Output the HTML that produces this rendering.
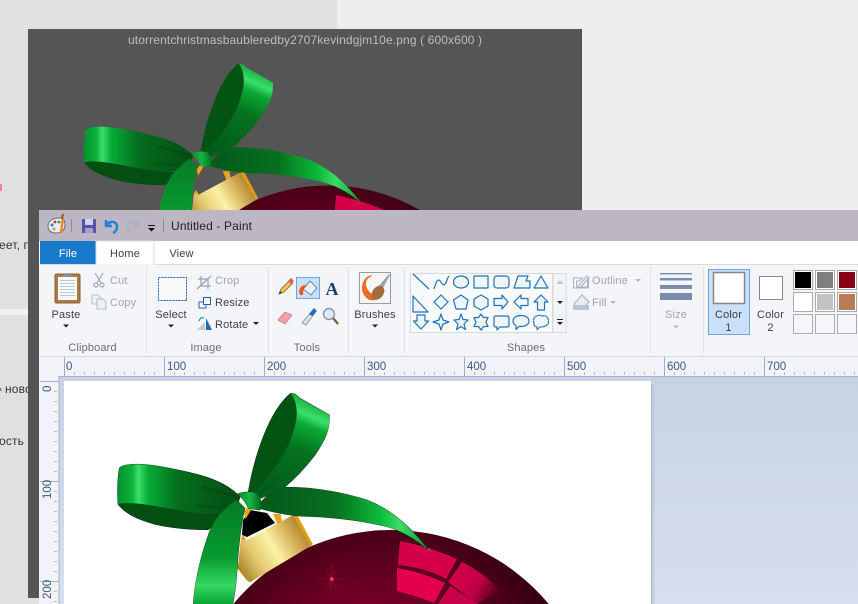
<!DOCTYPE html>
<html><head><meta charset="utf-8"><style>
html,body{margin:0;padding:0;background:#eee;overflow:hidden;width:858px;height:604px}
svg{display:block}
text{font-family:"Liberation Sans",sans-serif;font-size:11px;letter-spacing:.15px;fill:#3e3e46}
.d{fill:#a3a5a9}.g{fill:#6c6c74}.m{text-anchor:middle}
.r{font-size:11.5px;fill:#3d5a80;letter-spacing:0}
.s path,.s rect,.s ellipse,.s polygon{fill:#eef5fb;stroke:#2272b5;stroke-width:1.2;stroke-linejoin:round}
</style></head><body>
<svg width="858" height="604" viewBox="0 0 858 604" xmlns="http://www.w3.org/2000/svg">
<defs>
<linearGradient id="lp" x1="0" y1="0" x2="1" y2="0"><stop offset="0" stop-color="#08902c"/><stop offset=".12" stop-color="#0bb53a"/><stop offset=".17" stop-color="#3ce068"/><stop offset=".25" stop-color="#06ac36"/><stop offset=".5" stop-color="#056d1d"/><stop offset="1" stop-color="#034d12"/></linearGradient>
<linearGradient id="tp" gradientUnits="userSpaceOnUse" x1="705" y1="50" x2="590" y2="325"><stop offset="0" stop-color="#069a30"/><stop offset=".2" stop-color="#3ce068"/><stop offset=".3" stop-color="#0aa835"/><stop offset=".55" stop-color="#05721f"/><stop offset="1" stop-color="#04601a"/></linearGradient>
<linearGradient id="rt" x1="0" y1="0" x2="1" y2="0"><stop offset="0" stop-color="#04591a"/><stop offset=".45" stop-color="#06701f"/><stop offset=".72" stop-color="#0cbd3c"/><stop offset=".83" stop-color="#3bdc66"/><stop offset="1" stop-color="#069a30"/></linearGradient>
<linearGradient id="dn" x1="0" y1="0" x2="0" y2="1"><stop offset="0" stop-color="#057a24"/><stop offset=".55" stop-color="#079a2f"/><stop offset=".82" stop-color="#35d860"/><stop offset="1" stop-color="#08a436"/></linearGradient>
<linearGradient id="kn" x1="0" y1="0" x2="1" y2="0"><stop offset="0" stop-color="#078a2b"/><stop offset=".5" stop-color="#17b544"/><stop offset="1" stop-color="#056d20"/></linearGradient>
<linearGradient id="go" gradientUnits="userSpaceOnUse" x1="490" y1="570" x2="680" y2="450"><stop offset="0" stop-color="#b48f35"/><stop offset=".22" stop-color="#e2c870"/><stop offset=".5" stop-color="#fdf2a5"/><stop offset=".8" stop-color="#d0aa52"/><stop offset="1" stop-color="#a67e25"/></linearGradient>
<radialGradient id="ball" gradientUnits="userSpaceOnUse" cx="372" cy="690" r="200"><stop offset="0" stop-color="#a8003c"/><stop offset=".55" stop-color="#680022"/><stop offset="1" stop-color="#30000e"/></radialGradient>
<linearGradient id="fa" gradientUnits="userSpaceOnUse" x1="450" y1="565" x2="500" y2="595"><stop offset="0" stop-color="#d8004c"/><stop offset=".6" stop-color="#c00044"/><stop offset="1" stop-color="#a0003a" stop-opacity="0"/></linearGradient>
<linearGradient id="cv" x1="0" y1="0" x2="0" y2="1"><stop offset="0" stop-color="#c7d2e5"/><stop offset="1" stop-color="#d5dfee"/></linearGradient>
<linearGradient id="sh" x1="0" y1="0" x2="1" y2="0"><stop offset="0" stop-color="#aab7cc"/><stop offset="1" stop-color="#c7d2e5" stop-opacity="0"/></linearGradient>
<clipPath id="c1"><rect x="28" y="29" width="554" height="181"/></clipPath>
<clipPath id="c2"><rect x="64" y="381" width="587" height="223"/></clipPath>

<g id="bow">
 <g transform="translate(80,380) scale(.33333)">
  <path d="M505 335C525 220 570 90 632 40C665 60 665 200 560 345Z" fill="#035413"/>
  <path d="M632 40C640 38 650 45 660 55L748 105C750 150 735 180 705 225C670 270 640 300 610 325L530 360L510 340C590 270 640 190 650 110C652 80 645 55 632 40Z" fill="url(#tp)"/>
  <path d="M525 335L600 240M535 345L600 290" stroke="#034a12" stroke-width="8" opacity=".3" fill="none"/>
  <path d="M114 372C150 360 250 385 300 392C350 400 400 405 440 405L385 449C320 450 240 440 200 425C160 412 130 395 114 372Z" fill="#034f12"/>
  <path d="M118 265C130 250 180 250 230 258C300 270 370 285 410 303C440 315 465 335 480 350L470 385C430 410 380 405 300 392C240 382 160 362 114 372C112 340 112 300 118 265Z" fill="url(#lp)"/>
  <path d="M365 320L470 350M350 378L440 382" stroke="#023d0e" stroke-width="8" opacity=".35" fill="none"/>
  <path d="M540 370C560 345 590 325 620 322C700 320 800 340 860 360C940 390 1000 450 1045 510C1000 470 950 445 900 435C830 420 750 410 660 408C620 405 570 395 540 385Z" fill="url(#rt)"/>
  <path d="M470 360C420 390 395 430 380 480C360 540 345 600 340 672L458 672C465 640 470 600 473 540C478 480 485 420 495 385Z" fill="url(#dn)"/>
  <path d="M473 342C495 334 520 334 530 342C544 355 546 375 540 390L505 385C500 370 488 355 473 342Z" fill="url(#kn)"/>
 </g>
</g>
<g id="neck">
 <g transform="translate(80,380) scale(.33333)">
  <path d="M500 385a12 12 0 0 1 15 2l-18 30-5-20Z" fill="#e8a41a"/>
  <path d="M580 402l22 0 5 28-14 6Z" fill="#e8a41a"/>
  <path d="M490 465l8 12-10 10-6-10Z" fill="#e8a41a"/>
  <path d="M500 480L640 405L697 495L510 607L475 550L482 480Z" fill="url(#go)"/>
  <path d="M638 403L650 402L698 492L690 497Z" fill="#dc9d18"/>
  <path d="M475 550L510 607L500 600L470 562Z" fill="#b98414"/>
 </g>
</g>
<g id="orb">
 <path d="M233.300 604A205 205 0 0 1 548.700 604Z" fill="url(#ball)"/>
 <path d="M400 541C425 546 441 552 457 559L446 579C430 570 415 567 398 565Z" fill="#d40049"/>
 <path d="M397 568C415 571 430 576 445 583L434 603C420 597 408 594 397 591Z" fill="#e4004f"/>
 <path d="M462 562C478 570 490 580 500 590L477 604L448 582Z" fill="url(#fa)"/>
 <path d="M450 586L478 604H438Z" fill="#c8004a"/>
 <g stroke="#d81040" fill="none"><path d="M332 565L331 590" stroke-width=".7" opacity=".55"/><path d="M317 579H347" stroke-width=".5" opacity=".5"/><path d="M326 571L337 588M337 570L325 590" stroke-width=".7" opacity=".45"/></g>
 <circle cx="331.800" cy="579" r="1.800" fill="#ff4060"/>
</g>
</defs>

<!-- page background -->
<rect width="858" height="604" fill="#eeeeee"/>
<rect x="0" y="0" width="337" height="604" fill="#e0e0e0"/>
<rect x="0" y="309" width="337" height="6" fill="#f0f0f0"/>
<rect x="0" y="184" width="2" height="7" fill="#ff7a92"/>
<text x="-1" y="249" style="font-size:12px;fill:#333">еет, п</text>
<rect x="0" y="388" width="1.500" height="3" fill="#4a90d0"/>
<text x="5" y="393" style="font-size:12px;fill:#333">ново</text>
<text x="-1" y="445" style="font-size:12px;fill:#333">ость</text>

<!-- dark viewer -->
<rect x="28" y="29" width="554" height="569" fill="#555555"/>
<text x="128" y="44" textLength="354" style="font-size:12px;fill:#bdbdbd;letter-spacing:0">utorrentchristmasbaubleredby2707kevindgjm10e.png ( 600x600 )</text>
<g clip-path="url(#c1)">
 <g transform="translate(84,63) scale(.894) translate(-118,-393)">
  <use href="#orb"/><use href="#neck"/><use href="#bow"/>
 </g>
</g>

<!-- paint window -->
<rect x="39" y="210" width="819" height="394" fill="#f3f4f7"/>
<rect x="39" y="210" width="819" height="31" fill="#bdb6c3"/>
<rect x="39" y="241" width="819" height="23" fill="#ffffff"/>
<rect x="40" y="241" width="56" height="23" fill="#1979ca"/>
<text x="68" y="257" class="m" style="fill:#fff">File</text>
<path d="M96 264V241H154V264" fill="#fff" stroke="#dadbdc"/>
<text x="125" y="257" class="m">Home</text>
<text x="181.500" y="257" class="m">View</text>
<path d="M39 264.500H96M154 264.500H858" stroke="#dadbdc"/>
<rect x="39" y="265" width="819" height="91" fill="#f4f5f8"/>
<path d="M39 356.500H858" stroke="#d5d8e0"/>
<path d="M146.500 267V353M268.500 267V353M348.500 267V353M404.500 267V353M650.500 267V353M703.500 267V353" stroke="#dfe1e6"/>

<!-- title bar icons -->
<path d="M48 226c0-6 6-8 11-8 5 0 6 4 6 7 0 6-5 8-10 8-4 0-7-3-7-7Z" fill="#e8eef5" stroke="#5a6c80"/>
<circle cx="52" cy="225" r="1.500" fill="#3a78c8"/><circle cx="55" cy="222" r="1.500" fill="#d43a3a"/><circle cx="59" cy="222" r="1.500" fill="#3aa048"/><circle cx="54" cy="229" r="1.500" fill="#e09a20"/>
<path d="M61 233L63 218" stroke="#ee8a1e" stroke-width="2.500"/>
<path d="M62 219l1-5" stroke="#905a20" stroke-width="2"/>
<path d="M71.500 219V232M163.500 219V232" stroke="#8f8a96"/>
<rect x="82" y="219" width="14" height="14" rx="1" fill="#5e4fa8"/>
<rect x="85" y="219" width="8" height="6" fill="#cfd3ea"/>
<rect x="85" y="228" width="8" height="5" fill="#9fa3cf"/>
<path d="M106 220v6h6M106.500 225.500C110 220 117 221 117 227c0 3-2 5-4 6" fill="none" stroke="#1f84d8" stroke-width="2.500"/>
<path d="M138 220v6h-6M137.500 225.500C134 220 127 221 127 227c0 3 2 5 4 6" fill="none" stroke="#a8b2c0" stroke-width="2.500"/>
<path d="M148 225.500h7" stroke="#111"/><path d="M148 228h7l-3.500 3.500Z" fill="#111"/>
<text x="171" y="230" textLength="81" style="font-size:12px;fill:#222;letter-spacing:0">Untitled - Paint</text>

<!-- clipboard -->
<rect x="55" y="274" width="25" height="29" rx="1.500" fill="#a97a45" stroke="#8a6234"/>
<rect x="58" y="277" width="19" height="23" fill="#f7f8fa"/>
<path d="M60 280.500H75M60 283.500H75M60 286.500H75M60 289.500H75M60 292.500H75M60 295.500H75" stroke="#bcc6d6"/>
<path d="M61 277l3-2 3-2h1l3 2 3 2Z" fill="#8b8f96"/>
<text x="66" y="318" class="m">Paste</text>
<path d="M63 324.500h6l-3 3Z" fill="#222"/>
<g fill="none" stroke="#a4b0c2" stroke-width="1.300"><path d="M95 273l6 10M103 273l-6 10"/><circle cx="96" cy="285" r="2"/><circle cx="102" cy="285" r="2"/></g>
<text x="110" y="284" class="d">Cut</text>
<path d="M92 295h6l3 3v6h-9Z" fill="#eef2f6" stroke="#b3bfd0"/>
<path d="M97 299h6l3 3v7h-9Z" fill="#eef2f6" stroke="#b3bfd0"/>
<text x="110" y="306" class="d">Copy</text>
<text x="92.500" y="351" class="m g">Clipboard</text>

<!-- image -->
<rect x="158.500" y="277.500" width="28" height="23" fill="#f8f9fb" stroke="#1a62a8" stroke-dasharray="2 1"/>
<text x="171" y="318" class="m">Select</text>
<path d="M168 324.500h6l-3 3Z" fill="#222"/>
<path d="M201 276v10h10M198 279h10v10M197 289l14-13" fill="none" stroke="#93a2b8" stroke-width="1.200"/>
<text x="215" y="284" class="d">Crop</text>
<rect x="199" y="302" width="7" height="6" fill="#fff" stroke="#1b63ad"/>
<rect x="203.500" y="297.500" width="7" height="7" fill="#fff" stroke="#1b63ad"/>
<text x="215" y="306">Resize</text>
<path d="M197 330L205 322V330Z" fill="#c6c8ca"/><path d="M206 330V318L212 330Z" fill="#1b6cb8"/>
<path d="M199 321c1-3 3-4 5-3" fill="none" stroke="#1b8de0" stroke-width="1.200"/>
<text x="215" y="328">Rotate</text>
<path d="M253 322h6l-3 3Z" fill="#222"/>
<text x="206" y="351" class="m g">Image</text>

<!-- tools -->
<path d="M279 294l2-5 9-9 3 3-9 9Z" fill="#f2c14e" stroke="#7a6a3a" stroke-width=".8"/><path d="M288 281l3-3 3 3-3 3Z" fill="#e06060"/>
<path d="M279 294l1-3 2 2Z" fill="#333"/>
<rect x="296.500" y="277.500" width="23" height="21" fill="#c9e0f7" stroke="#6ba5e3"/>
<path d="M303 289l7-8 7 7-6 7Z" fill="#e4f0fa" stroke="#6d87a8"/><path d="M300 295c-2-5 0-9 5-10l1 2c-2 1-3 3-3 8Z" fill="#e8581c"/>
<text x="332" y="295" class="m" style="font-family:'Liberation Serif',serif;font-weight:bold;font-size:18px;fill:#1e3f6e;letter-spacing:0">A</text>
<path d="M278 320l7-8 7 3-7 9Z" fill="#f3a0a8" stroke="#c97a84" stroke-width=".8"/>
<path d="M302 323l10-12 3 2-9 12Z" fill="#d7e2ea" stroke="#7d8a96" stroke-width=".7"/><path d="M309 314l5-6 3 3-5 5Z" fill="#1f6cba"/>
<circle cx="329" cy="314" r="5.500" fill="#dceaf6" stroke="#8c99a8" stroke-width="1.400"/><path d="M333 318l5 6" stroke="#8a5a2e" stroke-width="2.200"/>
<text x="307" y="351" class="m g">Tools</text>

<!-- brushes -->
<rect x="359.500" y="272.500" width="31" height="31" fill="#f4f5f6" stroke="#9c9c9c"/>
<path d="M362 288c0-7 4-12 10-13-1 2-5 3-6 7-1 5 3 11 8 13 3 1 6 1 8 0-3 5-8 6-12 5-4-1-8-6-8-12Z" fill="#ee6a24"/>
<path d="M378 287l11-13 1 1-8 15Z" fill="#97a3b2"/>
<path d="M372 293c1-5 6-8 9-7 3 1 4 4 3 7-2 5-6 8-10 6-2-1-3-3-2-6Z" fill="#a36c3c"/>
<text x="375" y="318" class="m">Brushes</text>
<path d="M372 324.500h6l-3 3Z" fill="#222"/>

<!-- shapes -->
<rect x="410.500" y="273.500" width="142" height="59" fill="#f8fafc" stroke="#d6d9de"/>
<rect x="553" y="273.500" width="13" height="59" fill="#f4f5f8" stroke="#d6d9de"/>
<path d="M556 284l4-4 4 4Z" fill="#c3c8cf"/><path d="M557 301h6l-3 3Z" fill="#222"/><path d="M557 319.500h6" stroke="#222"/><path d="M557 322h6l-3 3Z" fill="#222"/>
<g class="s">
 <path d="M413 274L429 289" style="fill:none"/>
 <path d="M434 289C436 282 438 277 441 282C443 286 445 286 447 280C448 277 449 276 449 276" style="fill:none"/>
 <ellipse cx="461" cy="282" rx="7.500" ry="6"/>
 <rect x="474" y="276" width="14" height="12"/>
 <rect x="494" y="276" width="15" height="12" rx="3"/>
 <path d="M514 288L518 276H528L526 281H530L530 288Z"/>
 <path d="M534 288L541 276L548 288Z"/>
 <path d="M413 296V312H428Z"/>
 <path d="M441 295L448 302L441 309L434 302Z"/>
 <path d="M461 295L468 300L466 309H456L453.500 300Z"/>
 <path d="M481 295L488 299V306L481 310L474 306V299Z"/>
 <path d="M494 298.500H502V295L508 302L502 309V305.500H494Z"/>
 <path d="M528 298.500H521V295L514 302L521 309V305.500H528Z"/>
 <path d="M541 295L548 302H544.500V310H537.500V302H534Z"/>
 <path d="M417 315H425V321H428.500L421 329L413.500 321H417Z"/>
 <path d="M441 314L443 320L449 322L443 324L441 330L439 324L433 322L439 320Z"/>
 <path d="M461 314L463 319.500L468 320L464 324L465.500 329.500L461 326.500L456.500 329.500L458 324L454 320L459 319.500Z"/>
 <path d="M481 314L483.500 317.500H488L486 322L488 326.500H483.500L481 330L478.500 326.500H474L476 322L474 317.500H478.500Z"/>
 <path d="M496 316H507Q509 316 509 318V325Q509 327 507 327H500L497 330V327H496Q494 327 494 325V318Q494 316 496 316Z"/>
 <path d="M521 315.500C526 315.500 529 318 529 321C529 324 526 326.500 521 326.500L519 326.500L516 329.500V325.500C514 324.500 513 323 513 321C513 318 516 315.500 521 315.500Z"/>
 <path d="M535 317C537 315 540 315 542 316C545 315 548 317 548 319C549 321 549 323 547 325C545 327 542 327 540 327L537 329.500L537 327C535 327 533.500 325 534 323C533 321 533.500 318 535 317Z" stroke-dasharray="3 .4"/>
</g>
<text x="526" y="351" class="m g">Shapes</text>

<!-- outline fill -->
<path d="M573.500 278h9l-3 3-3 0v6l11 0v-8l1-1v10h-15Z" fill="none" stroke="#a8b4c4"/>
<path d="M578 286l9-10 2 2-9 10Z" fill="#dfe6ee" stroke="#9aa7b8" stroke-width=".8"/>
<text x="592" y="284" class="d">Outline</text><path d="M635 279h6l-3 3Z" fill="#b5b8bd"/>
<path d="M574 304l8-9 7 7-6 6h-7Z" fill="#e7edf3" stroke="#a3b1c3"/><rect x="573" y="305" width="16" height="5" fill="#b7c5d8"/>
<text x="592" y="306" class="d">Fill</text><path d="M610 301h6l-3 3Z" fill="#b5b8bd"/>

<!-- size -->
<rect x="660" y="273" width="32" height="1.400" fill="#7b8cab"/>
<rect x="660" y="278" width="32" height="2.400" fill="#7b8cab"/>
<rect x="660" y="285" width="32" height="4" fill="#7b8cab"/>
<rect x="660" y="293" width="32" height="7" fill="#7b8cab"/>
<text x="676" y="318" class="m d">Size</text>
<path d="M673 325.500h6l-3 3Z" fill="#b5b8bd"/>

<!-- colours -->
<rect x="708.500" y="269.500" width="41" height="65" fill="#c9e0f7" stroke="#6ba5e3"/>
<rect x="713.500" y="272.500" width="31" height="31" fill="#fff" stroke="#868686" stroke-width="1.500"/>
<text x="728.500" y="318" class="m">Color</text><text x="728.500" y="331" class="m">1</text>
<rect x="759.500" y="276.500" width="23" height="23" fill="#fff" stroke="#868686"/>
<text x="770.500" y="318" class="m">Color</text><text x="770.500" y="331" class="m">2</text>
<g stroke="#ababab" fill="#f5f6f9">
<rect x="793.500" y="270.500" width="19" height="19" fill="#fff"/><rect x="815.500" y="270.500" width="19" height="19" fill="#fff"/><rect x="837.500" y="270.500" width="19" height="19" fill="#fff"/>
<rect x="793.500" y="292.500" width="19" height="19" fill="#fff"/><rect x="815.500" y="292.500" width="19" height="19" fill="#fff"/><rect x="837.500" y="292.500" width="19" height="19" fill="#fff"/>
<rect x="793.500" y="314.500" width="19" height="19"/><rect x="815.500" y="314.500" width="19" height="19"/><rect x="837.500" y="314.500" width="19" height="19"/>
</g>
<rect x="795" y="272" width="16" height="16" fill="#000"/><rect x="817" y="272" width="16" height="16" fill="#7f7f7f"/><rect x="839" y="272" width="16" height="16" fill="#880015"/>
<rect x="817" y="294" width="16" height="16" fill="#c3c3c3"/><rect x="839" y="294" width="16" height="16" fill="#b97a57"/>

<!-- rulers -->
<rect x="40" y="357" width="818" height="21" fill="#f1f3f8"/>
<rect x="40" y="357" width="19" height="247" fill="#f1f3f8"/>
<path d="M64.500 357V378M164.500 357V378M264.500 357V378M364.500 357V378M464.500 357V378M564.500 357V378M664.500 357V378M764.500 357V378" stroke="#a0adc2"/>
<path d="M74.500 372V375M84.500 372V375M94.500 372V375M104.500 372V375M114.500 372V375M124.500 372V375M134.500 372V375M144.500 372V375M154.500 372V375M174.500 372V375M184.500 372V375M194.500 372V375M204.500 372V375M214.500 372V375M224.500 372V375M234.500 372V375M244.500 372V375M254.500 372V375M274.500 372V375M284.500 372V375M294.500 372V375M304.500 372V375M314.500 372V375M324.500 372V375M334.500 372V375M344.500 372V375M354.500 372V375M374.500 372V375M384.500 372V375M394.500 372V375M404.500 372V375M414.500 372V375M424.500 372V375M434.500 372V375M444.500 372V375M454.500 372V375M474.500 372V375M484.500 372V375M494.500 372V375M504.500 372V375M514.500 372V375M524.500 372V375M534.500 372V375M544.500 372V375M554.500 372V375M574.500 372V375M584.500 372V375M594.500 372V375M604.500 372V375M614.500 372V375M624.500 372V375M634.500 372V375M644.500 372V375M654.500 372V375M674.500 372V375M684.500 372V375M694.500 372V375M704.500 372V375M714.500 372V375M724.500 372V375M734.500 372V375M744.500 372V375M754.500 372V375M774.500 372V375M784.500 372V375M794.500 372V375M804.500 372V375M814.500 372V375M824.500 372V375M834.500 372V375M844.500 372V375M854.500 372V375" stroke="#b3bccb"/>
<text x="66" y="370" class="r">0</text><text x="167" y="370" class="r">100</text><text x="267" y="370" class="r">200</text><text x="367" y="370" class="r">300</text><text x="467" y="370" class="r">400</text><text x="567" y="370" class="r">500</text><text x="667" y="370" class="r">600</text><text x="767" y="370" class="r">700</text>
<path d="M40 381.500H59M40 481.500H59M40 581.500H59" stroke="#a0adc2"/>
<path d="M54 391.500H57M54 401.500H57M54 411.500H57M54 421.500H57M54 431.500H57M54 441.500H57M54 451.500H57M54 461.500H57M54 471.500H57M54 491.500H57M54 501.500H57M54 511.500H57M54 521.500H57M54 531.500H57M54 541.500H57M54 551.500H57M54 561.500H57M54 571.500H57M54 591.500H57M54 601.500H57" stroke="#b3bccb"/>
<text transform="translate(51,392) rotate(-90)" class="r">0</text>
<text transform="translate(51,499) rotate(-90)" class="r">100</text>
<text transform="translate(51,599) rotate(-90)" class="r">200</text>

<!-- canvas -->
<rect x="59" y="376" width="799" height="228" fill="url(#cv)"/>
<path d="M59 604V376.500H858" fill="none" stroke="#a6b2c6"/>
<rect x="651" y="384" width="5" height="220" fill="url(#sh)"/>
<rect x="64" y="381" width="587" height="223" fill="#ffffff"/>
<g clip-path="url(#c2)">
 <use href="#orb"/>
 <path d="M243 520L250 510L267 513L275 523L247 537L242 535Z" fill="#000"/>
 <use href="#neck"/>
 <g stroke="#111" stroke-width="2"><use href="#bow"/></g>
 <use href="#bow"/>
 <circle cx="429" cy="549.500" r="1" fill="#1aa0c0"/>
</g>
</svg>
</body></html>
